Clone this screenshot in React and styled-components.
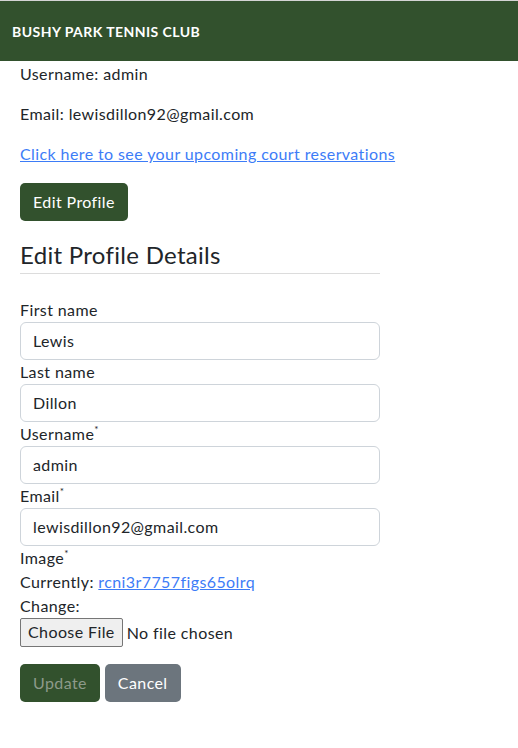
import React from 'react';
import styled, { createGlobalStyle } from 'styled-components';

const GlobalStyle = createGlobalStyle`
  * { box-sizing: border-box; }
  body {
    margin: 0;
    background: #fff;
    color: #212529;
    font-family: Lato, "Noto Sans", sans-serif;
    font-size: 16px;
    line-height: 1.5;
    letter-spacing: 0.4px;
    border-top: 1px solid #d4d4d4;
  }
`;

const Navbar = styled.header`
  height: 60px;
  background: #32512d;
  display: flex;
  align-items: center;
  padding: 0 12px;
`;

const Brand = styled.div`
  color: #fff;
  font-weight: 700;
  font-size: 14px;
  letter-spacing: 0.45px;
`;

const Main = styled.main`
  padding: 1px 20px 0;
`;

const Info = styled.p`
  margin: 0 0 ${p => (p.$gap ? 17 : 16)}px;
`;

const Link = styled.a`
  color: #3d7cf7;
  text-decoration: underline;
`;

const Button = styled.button`
  font: inherit;
  letter-spacing: inherit;
  height: 38px;
  padding: 0 12px;
  border: 1px solid transparent;
  border-radius: 5px;
  background: ${p => (p.$variant === 'secondary' ? '#6c757d' : '#32512d')};
  color: ${p => (p.$muted ? '#8d9a8a' : '#fff')};
  cursor: pointer;
`;

const Heading = styled.h2`
  margin: 20px 0 0;
  font-size: 24px;
  font-weight: 400;
  line-height: 1.2;
  letter-spacing: 0.3px;
  width: 360px;
  padding-bottom: 3px;
  border-bottom: 1px solid #dcdcdc;
`;

const Form = styled.form`
  width: 360px;
  margin-top: 24px;
`;

const Label = styled.label`
  display: block;
  line-height: 24px;
`;

const Req = styled.sup`
  font-size: 10px;
  vertical-align: top;
  line-height: 14px;
`;

const Input = styled.input`
  display: block;
  width: 100%;
  height: 38px;
  padding: 0 12px;
  font: inherit;
  letter-spacing: inherit;
  color: #212529;
  border: 1px solid #ced4da;
  border-radius: 6px;
  outline: none;
`;

const Line = styled.div`
  line-height: 24px;
`;

const FileInput = styled.input`
  font: inherit;
  letter-spacing: inherit;
  &::file-selector-button {
    font: inherit;
    letter-spacing: inherit;
    height: 29px;
    padding: 0 7px;
    margin-right: 4px;
    background: #efefef;
    border: 1px solid #767676;
    border-radius: 2px;
    color: #212529;
  }
`;

const Actions = styled.div`
  display: flex;
  gap: 5px;
  margin-top: 17px;
`;

export default function App() {
  return (
    <>
      <GlobalStyle />
      <Navbar>
        <Brand>BUSHY PARK TENNIS CLUB</Brand>
      </Navbar>
      <Main>
        <Info>Username: admin</Info>
        <Info>Email: lewisdillon92@gmail.com</Info>
        <Info $gap>
          <Link href="#">Click here to see your upcoming court reservations</Link>
        </Info>
        <Button type="button">Edit Profile</Button>
        <Heading>Edit Profile Details</Heading>
        <Form onSubmit={e => e.preventDefault()}>
          <Label>First name</Label>
          <Input defaultValue="Lewis" />
          <Label>Last name</Label>
          <Input defaultValue="Dillon" />
          <Label>Username<Req>*</Req></Label>
          <Input defaultValue="admin" />
          <Label>Email<Req>*</Req></Label>
          <Input defaultValue="lewisdillon92@gmail.com" />
          <Label>Image<Req>*</Req></Label>
          <Line>
            Currently: <Link href="#">rcni3r7757figs65olrq</Link>
          </Line>
          <Line>Change:</Line>
          <FileInput type="file" />
          <Actions>
            <Button type="submit" $muted>Update</Button>
            <Button type="button" $variant="secondary">Cancel</Button>
          </Actions>
        </Form>
      </Main>
    </>
  );
}
